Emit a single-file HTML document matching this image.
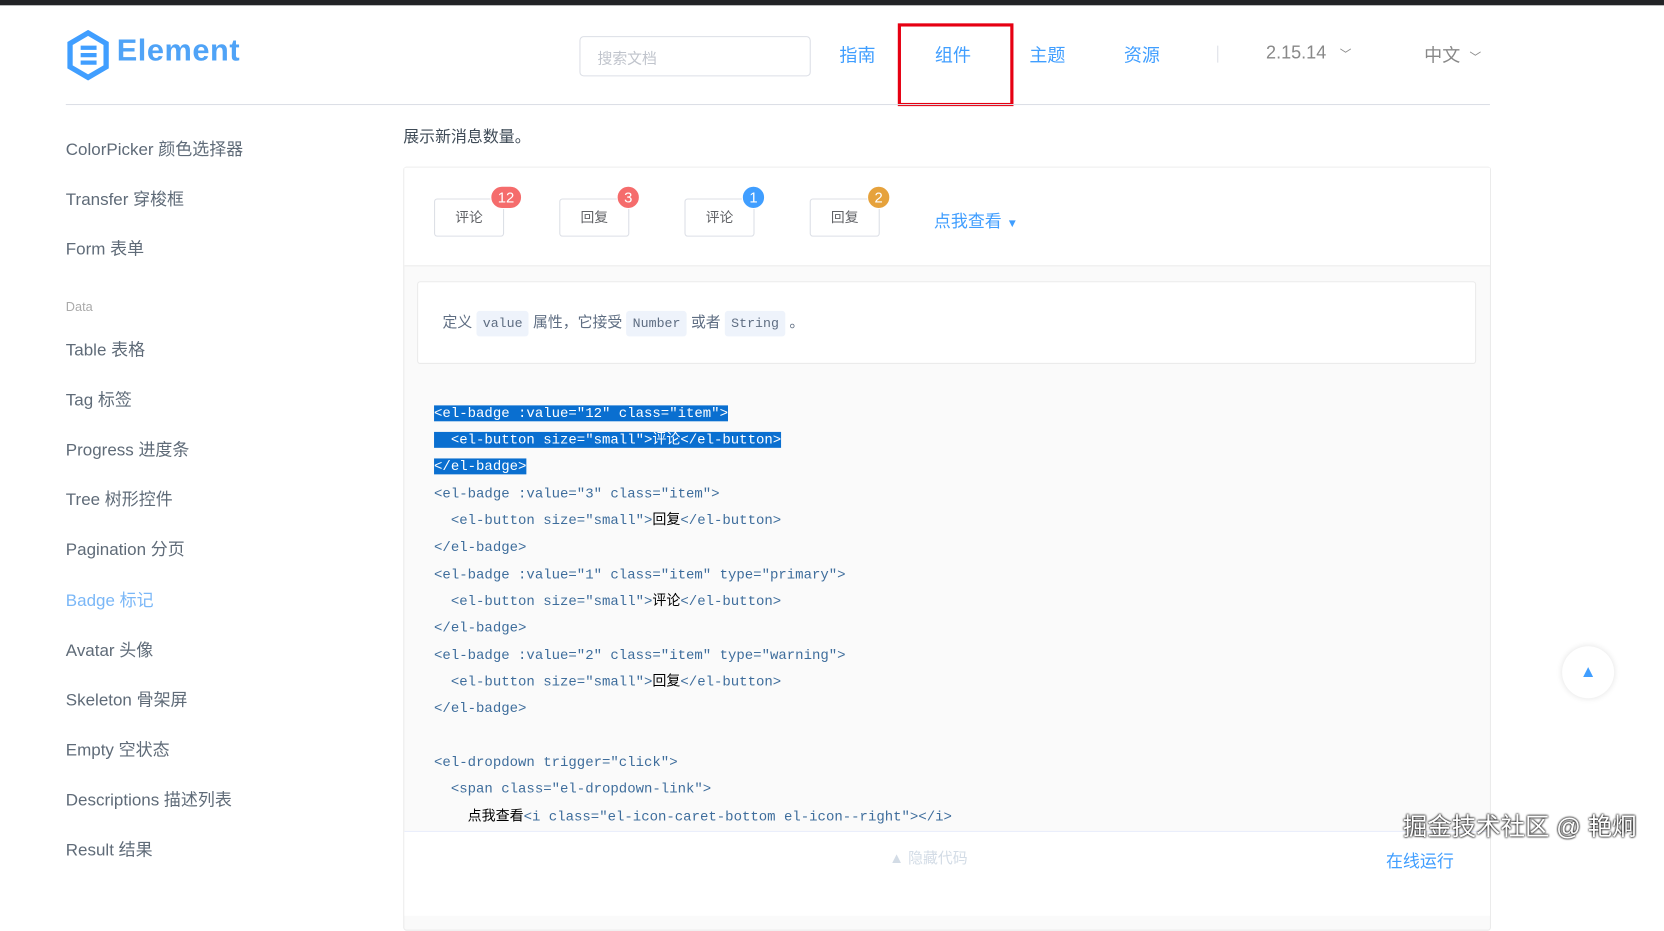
<!DOCTYPE html>
<html><head><meta charset="utf-8"><style>
*{margin:0;padding:0;box-sizing:border-box}
body{width:1664px;height:862px;overflow:hidden;background:#fff;font-family:"Liberation Sans","Noto Sans CJK SC",sans-serif;color:#333}
#w{position:absolute;left:0;top:0;width:1568px;height:812px;transform:scale(1.06122);transform-origin:0 0}
.abs{position:absolute}
.top{left:0;top:0;width:1568px;height:5px;background:#222326}
.hl{left:62px;top:98px;width:1342px;height:1px;background:#dcdfe6}
.nav{font-size:17px;color:#409eff;top:38px}
.side{left:62px;font-size:16px;color:#5f6b78;white-space:nowrap}
.btn{top:187px;width:66px;height:36px;border:1px solid #dcdfe6;border-radius:3px;font-size:13px;color:#606266;text-align:center;line-height:34px;background:#fff}
.bd{height:22px;border-radius:11px;color:#fff;font-size:14px;line-height:20px;text-align:center;border:1px solid #fff;padding:0 6px;min-width:22px}
.code{left:409px;font-family:"Liberation Mono","Noto Sans CJK SC",monospace;font-size:13.2px;color:#3e6d9c;white-space:pre;line-height:18px}
.sel{background:#0a6fd0;color:#fff}
.cb{color:#000}
code{font-family:"Liberation Mono",monospace;font-size:12.5px;background:#eef3fb;color:#5e6d82;padding:5px 6px;border-radius:3px}
</style></head><body><div id="w">
<div class="abs top"></div>
<svg class="abs" style="left:62px;top:28px" width="42" height="48" viewBox="0 0 42 48"><path d="M21 3 L38 13 L38 35 L21 45 L4 35 L4 13 Z" fill="none" stroke="#409eff" stroke-width="5"/><path d="M14 17 L29 17 M14 24 L29 24 M14 31 L29 31" stroke="#409eff" stroke-width="4"/></svg>
<div class="abs" style="left:110px;top:32px;font-size:29px;font-weight:bold;color:#4fa3f7;letter-spacing:0.5px">Element</div>
<div class="abs" style="left:546px;top:34px;width:218px;height:38px;border:1px solid #dcdfe6;border-radius:4px;font-size:14px;color:#c0c4cc;padding:10px 16px">搜索文档</div>
<div class="abs nav" style="left:791px">指南</div>
<div class="abs nav" style="left:881px;color:#409eff">组件</div>
<div class="abs" style="left:846px;top:22px;width:109px;height:78px;border:3px solid #e60012"></div>
<div class="abs nav" style="left:970px">主题</div>
<div class="abs nav" style="left:1059px">资源</div>
<div class="abs" style="left:1147px;top:43px;width:1px;height:16px;background:#dcdfe6"></div>
<div class="abs nav" style="left:1193px;color:#888;font-size:17px;top:40px">2.15.14 <span style="font-size:11px;margin-left:8px">﹀</span></div>
<div class="abs nav" style="left:1342px;color:#888">中文 <span style="font-size:11px;margin-left:4px">﹀</span></div>
<div class="abs hl"></div>
<div class="abs side" style="top:127px">ColorPicker 颜色选择器</div>
<div class="abs side" style="top:174px">Transfer 穿梭框</div>
<div class="abs side" style="top:221px">Form 表单</div>
<div class="abs side" style="top:282px;font-size:12px;color:#aaa">Data</div>
<div class="abs side" style="top:316px">Table 表格</div>
<div class="abs side" style="top:363px">Tag 标签</div>
<div class="abs side" style="top:410px">Progress 进度条</div>
<div class="abs side" style="top:457px">Tree 树形控件</div>
<div class="abs side" style="top:504px">Pagination 分页</div>
<div class="abs side" style="top:552px;color:#7ab7f7">Badge 标记</div>
<div class="abs side" style="top:599px">Avatar 头像</div>
<div class="abs side" style="top:646px">Skeleton 骨架屏</div>
<div class="abs side" style="top:693px">Empty 空状态</div>
<div class="abs side" style="top:740px">Descriptions 描述列表</div>
<div class="abs side" style="top:787px">Result 结果</div>
<div class="abs" style="left:380px;top:118px;font-size:15px;color:#3e4a56">展示新消息数量。</div>
<div class="abs" style="left:380px;top:157px;width:1025px;height:720px;border:1px solid #ebebeb;border-radius:3px;background:#fafafa"></div>
<div class="abs" style="left:381px;top:158px;width:1023px;height:93px;background:#fff;border-bottom:1px solid #ebebeb"></div>
<div class="abs btn" style="left:409px">评论</div><div class="abs bd" style="left:462px;top:175px;background:#f56c6c">12</div>
<div class="abs btn" style="left:527px">回复</div><div class="abs bd" style="left:581px;top:175px;background:#f56c6c">3</div>
<div class="abs btn" style="left:645px">评论</div><div class="abs bd" style="left:699px;top:175px;background:#409eff">1</div>
<div class="abs btn" style="left:763px">回复</div><div class="abs bd" style="left:817px;top:175px;background:#e6a23c">2</div>
<div class="abs" style="left:880px;top:195px;font-size:16px;color:#409eff">点我查看 <span style="font-size:11px">▼</span></div>
<div class="abs" style="left:393px;top:265px;width:998px;height:78px;background:#fff;border:1px solid #ebebeb;border-radius:3px;font-size:14px;color:#5e6d82;padding:27px 23px">定义 <code>value</code> 属性，它接受 <code>Number</code> 或者 <code>String</code> 。</div>
<div class="abs code" style="top:381px"><span class="sel">&lt;el-badge :value="12" class="item"&gt;</span></div>
<div class="abs code" style="top:406px"><span class="sel">  &lt;el-button size="small"&gt;评论&lt;/el-button&gt;</span></div>
<div class="abs code" style="top:431px"><span class="sel">&lt;/el-badge&gt;</span></div>
<div class="abs code" style="top:457px">&lt;el-badge :value="3" class="item"&gt;</div>
<div class="abs code" style="top:482px">  &lt;el-button size="small"&gt;<span class="cb">回复</span>&lt;/el-button&gt;</div>
<div class="abs code" style="top:507px">&lt;/el-badge&gt;</div>
<div class="abs code" style="top:533px">&lt;el-badge :value="1" class="item" type="primary"&gt;</div>
<div class="abs code" style="top:558px">  &lt;el-button size="small"&gt;<span class="cb">评论</span>&lt;/el-button&gt;</div>
<div class="abs code" style="top:583px">&lt;/el-badge&gt;</div>
<div class="abs code" style="top:609px">&lt;el-badge :value="2" class="item" type="warning"&gt;</div>
<div class="abs code" style="top:634px">  &lt;el-button size="small"&gt;<span class="cb">回复</span>&lt;/el-button&gt;</div>
<div class="abs code" style="top:659px">&lt;/el-badge&gt;</div>
<div class="abs code" style="top:710px">&lt;el-dropdown trigger="click"&gt;</div>
<div class="abs code" style="top:735px">  &lt;span class="el-dropdown-link"&gt;</div>
<div class="abs code" style="top:761px">    <span class="cb">点我查看</span>&lt;i class="el-icon-caret-bottom el-icon--right"&gt;&lt;/i&gt;</div>
<div class="abs" style="left:381px;top:783px;width:1023px;height:80px;background:#fff;border-top:1px solid #eaeefb"></div>
<div class="abs" style="left:838px;top:798px;font-size:14px;color:#d3dce6">▲ 隐藏代码</div>
<div class="abs" style="left:1306px;top:798px;font-size:16px;color:#409eff">在线运行</div>
<div class="abs" style="left:1472px;top:609px;width:49px;height:49px;border-radius:50%;background:#fff;box-shadow:0 0 6px rgba(0,0,0,.12);color:#409eff;text-align:center;line-height:49px;font-size:16px">▲</div>
<div class="abs" style="left:1322px;top:760px;font-size:23px;color:#fff;text-shadow:0 0 2px #000,0 0 2px #000">掘金技术社区 @ 艳炯</div>
</div></body></html>
